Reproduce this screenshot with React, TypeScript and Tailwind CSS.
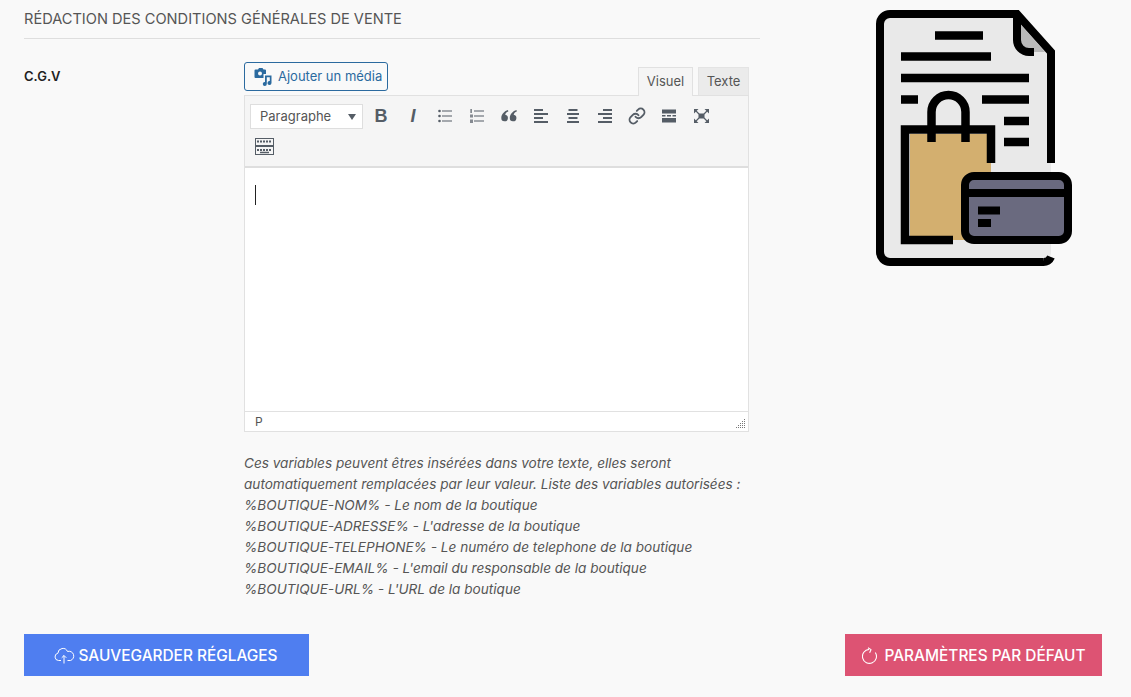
import type { ReactNode } from "react";
import { Link } from "lucide-react";

const VARIABLES = [
  "%BOUTIQUE-NOM% - Le nom de la boutique",
  "%BOUTIQUE-ADRESSE% - L'adresse de la boutique",
  "%BOUTIQUE-TELEPHONE% - Le numéro de telephone de la boutique",
  "%BOUTIQUE-EMAIL% - L'email du responsable de la boutique",
  "%BOUTIQUE-URL% - L'URL de la boutique",
];

function MediaIcon() {
  return (
    <svg width="19" height="19" viewBox="0 0 19 19" fill="#2b6a9f">
      <path d="M1.500 2.500H4L5 1h3.500l1 1.500H11a1 1 0 0 1 1 1V7H9.500v4H1.500a1 1 0 0 1-1-1V3.500a1 1 0 0 1 1-1Z" />
      <circle cx="6" cy="6.500" r="2" fill="#f9f9f9" />
      <path d="M11 8.500h6.500v7.500a2 2 0 1 1-1.700-2V10.200h-3v6.800a2 2 0 1 1-1.800-2Z" />
    </svg>
  );
}

function Bullets() {
  return (
    <svg width="16" height="16" viewBox="0 0 16 16" fill="#555d66">
      <circle cx="2.500" cy="3" r="1.300" /><circle cx="2.500" cy="8" r="1.300" /><circle cx="2.500" cy="13" r="1.300" />
      <rect x="5" y="2.500" width="10" height="1" /><rect x="5" y="7.500" width="10" height="1" /><rect x="5" y="12.500" width="10" height="1" />
    </svg>
  );
}

function Numbered() {
  return (
    <svg width="16" height="16" viewBox="0 0 16 16" fill="#555d66">
      <rect x="1.500" y="1" width="1.200" height="4" /><rect x="1" y="6.500" width="3" height="3" opacity="0.7" /><rect x="1" y="11.500" width="3" height="3.500" opacity="0.7" />
      <rect x="5" y="2.500" width="10" height="1" /><rect x="5" y="7.500" width="10" height="1" /><rect x="5" y="12.500" width="10" height="1" />
    </svg>
  );
}

function Quote() {
  return (
    <svg width="16" height="16" viewBox="0 0 16 16" fill="#555d66">
      <path d="M7 2C3.500 3 .3 6 .3 10a3.300 3.300 0 1 0 3.900-3.200C4.400 5.300 5.500 4.200 7.300 3.600Z" />
      <path d="M15.500 2C12 3 8.800 6 8.800 10a3.300 3.300 0 1 0 3.900-3.200c.2-1.500 1.300-2.600 3.100-3.200Z" />
    </svg>
  );
}

function Align({ side }: { side: "left" | "center" | "right" }) {
  const shortX = side === "left" ? 1 : side === "center" ? 3.500 : 6;
  const wideX = side === "center" ? 2 : 1;
  return (
    <svg width="16" height="16" viewBox="0 0 16 16" fill="#555d66">
      <rect x={shortX} y="1" width="9" height="2" />
      <rect x={wideX} y="5" width={side === "center" ? 12 : 14} height="2" />
      <rect x={shortX} y="9" width="9" height="2" />
      <rect x={wideX} y="13" width={side === "center" ? 12 : 14} height="2" />
    </svg>
  );
}

function ReadMore() {
  return (
    <svg width="16" height="16" viewBox="0 0 16 16" fill="#555d66">
      <rect x="1" y="1.500" width="14" height="4" />
      <rect x="1" y="7" width="3.500" height="1.500" /><rect x="6" y="7" width="4" height="1.500" /><rect x="11.500" y="7" width="3.500" height="1.500" />
      <rect x="1" y="10" width="14" height="4.500" />
    </svg>
  );
}

function Fullscreen() {
  return (
    <svg width="17" height="16" viewBox="0 0 17 16" fill="#555d66">
      <rect x="5.500" y="5.500" width="6" height="5" />
      <path d="M1 1h4.500L1 5.500ZM16 1v4.500L11.500 1ZM1 15v-4.500L5.500 15ZM16 15h-4.500L16 10.500Z" />
      <path d="M3 3l3 3M14 3l-3 3M3 13l3-3M14 13l-3-3" stroke="#555d66" strokeWidth="1.200" />
    </svg>
  );
}

function KeyboardIcon() {
  return (
    <svg width="19" height="17" viewBox="0 0 19 17" fill="none" stroke="#555d66">
      <rect x="0.500" y="0.500" width="18" height="7" />
      <rect x="0.500" y="8.500" width="18" height="8" />
      <path d="M2 3.500h15M2 12h15" strokeWidth="2" strokeDasharray="2 1" />
      <path d="M5 14.500h9" strokeWidth="1.500" />
    </svg>
  );
}

function ToolButton({ children }: { children: ReactNode }) {
  return <div className="flex h-[30px] w-8 items-center justify-center">{children}</div>;
}

function Illustration() {
  return (
    <svg width="200" height="260" viewBox="875 8 200 260" fill="none">
      <path d="M880 24a10 10 0 0 1 10-10h127l34 38v200a10 10 0 0 1-10 10H890a10 10 0 0 1-10-10Z" fill="#e9e9e9" />
      <path d="M1021 25l24 27h-24Z" fill="#b9b9b9" />
      <path d="M1043 262a8 8 0 0 0 8-5M1051 163V52l-34-38H890a10 10 0 0 0-10 10v228a10 10 0 0 0 10 10h153" stroke="#000" strokeWidth="8" />
      <path d="M1017 14v26a12 12 0 0 0 12 12h5" stroke="#000" strokeWidth="8" />
      <path d="M935 35.500h48M901 56.500h90M901 78h128M901 99.500h17M982 99.500h47M1004 121h25M1004 142h25" stroke="#000" strokeWidth="8.500" />
      <rect x="910" y="134" width="81" height="106" fill="#d3af6f" />
      <path d="M953 240h-48V129.500h86V163" stroke="#000" strokeWidth="8.500" />
      <path d="M931.500 142v-30a17 17 0 0 1 34 0v30" stroke="#000" strokeWidth="8.500" />
      <rect x="965" y="176" width="103" height="64" rx="9" fill="#6a6a7f" stroke="#000" strokeWidth="8" />
      <path d="M965 193h103M978 210.500h22M978 223h13" stroke="#000" strokeWidth="8" />
    </svg>
  );
}

function CloudUpload() {
  return (
    <svg width="21" height="17" viewBox="0 0 21 17" fill="none" stroke="#fff" strokeWidth="1">
      <path d="M7 13.500H4.500a3.700 3.700 0 0 1-.6-7.300A5 5 0 0 1 13.500 4.500a4.500 4.500 0 0 1 3 9H13.500" />
      <path d="M10 16.500V8.500M7.700 10.800 10 8.500l2.300 2.300" />
    </svg>
  );
}

function Reset() {
  return (
    <svg width="17" height="18" viewBox="0 0 17 18" fill="none" stroke="#fff" strokeWidth="1.100">
      <path d="M13.300 5.500a7 7 0 1 1-6.300-3.100" />
      <path d="M6 0.800 9 2.600 7.600 5.800" />
    </svg>
  );
}

export default function App() {
  return (
    <div className="flex h-[697px] w-[1131px] flex-col overflow-hidden bg-[#f9f9f9] pl-6 pr-[29px] font-['Inter',sans-serif] text-[#555]">
      <div className="flex">
        <div className="w-[736px]">
          <h2 className="flex h-[39px] items-center border-b border-[#dedede] pt-px text-[14.600px] text-[#555]">
            RÉDACTION DES CONDITIONS GÉNÉRALES DE VENTE
          </h2>

          <div className="mt-[23px] flex">
            <div className="w-[220px] pt-[5px] text-[13px] font-semibold text-[#222]">C.G.V</div>
            <div className="w-[505px]">
              <div className="flex items-end justify-between">
                <button className="mb-1 flex h-[29px] w-[144px] items-center gap-[5px] rounded-[3px] border border-[#2b6a9f] pl-[9px] text-[13px] text-[#2b6a9f]">
                  <MediaIcon />
                  Ajouter un média
                </button>
                <div className="flex items-end gap-[5px]">
                  <div className="relative top-px z-10 flex h-[29px] w-[55px] items-center justify-center border border-b-0 border-[#e1e1e1] bg-[#f5f5f5] text-[13px] text-[#555]">
                    Visuel
                  </div>
                  <div className="flex h-[28px] w-[51px] items-center justify-center border border-b-0 border-[#e4e4e4] bg-[#ebebeb] text-[13px] text-[#555]">
                    Texte
                  </div>
                </div>
              </div>

              <div className="border border-[#e1e1e1] bg-white">
                <div className="h-[72px] border-b-2 border-[#dedede] bg-[#f5f5f5] pl-[5px] pt-[5px]">
                  <div className="flex items-center">
                    <div className="mr-[2px] flex h-[25px] w-[113px] items-center justify-between border border-[#dedede] bg-white pl-[9px] pr-[6px] pt-px text-[13px] text-[#555]">
                      Paragraphe
                      <span className="h-0 w-0 border-x-[4px] border-t-[6px] border-x-transparent border-t-[#555d66]" />
                    </div>
                    <ToolButton><span className="font-['Liberation_Sans',sans-serif] text-[18px] font-bold text-[#555d66]">B</span></ToolButton>
                    <ToolButton><span className="font-['Liberation_Sans',sans-serif] text-[18px] font-bold italic text-[#555d66]">I</span></ToolButton>
                    <ToolButton><Bullets /></ToolButton>
                    <ToolButton><Numbered /></ToolButton>
                    <ToolButton><Quote /></ToolButton>
                    <ToolButton><Align side="left" /></ToolButton>
                    <ToolButton><Align side="center" /></ToolButton>
                    <ToolButton><Align side="right" /></ToolButton>
                    <ToolButton><Link size={18} strokeWidth={2.500} color="#555d66" /></ToolButton>
                    <ToolButton><ReadMore /></ToolButton>
                    <ToolButton><Fullscreen /></ToolButton>
                  </div>
                  <div className="flex h-[30px] w-[29px] items-center justify-center">
                    <KeyboardIcon />
                  </div>
                </div>
                <div className="h-[243px] pl-[10px] pt-[17px]">
                  <div className="h-[20px] w-px bg-[#222]" />
                </div>
                <div className="relative flex h-[20px] items-center border-t border-[#e1e1e1] pl-[10px] text-[12px] text-[#555]">
                  P
                  <svg className="absolute bottom-[3px] right-[3px]" width="9" height="9" viewBox="0 0 9 9" fill="#777">
                    <path d="M8 0h1v1H8zM6 2h1v1H6zM8 2h1v1H8zM4 4h1v1H4zM6 4h1v1H6zM8 4h1v1H8zM2 6h1v1H2zM4 6h1v1H4zM6 6h1v1H6zM8 6h1v1H8zM0 8h1v1H0zM2 8h1v1H2zM4 8h1v1H4zM6 8h1v1H6zM8 8h1v1H8z" />
                  </svg>
                </div>
              </div>

              <p className="mt-[21px] w-[505px] text-[13.600px] leading-[21px] italic text-[#555]">
                Ces variables peuvent êtres insérées dans votre texte, elles seront automatiquement remplacées par leur valeur. Liste des variables autorisées :
                {VARIABLES.map((line) => (
                  <span key={line} className="block">{line}</span>
                ))}
              </p>
            </div>
          </div>
        </div>
        <div className="ml-[115px] mt-2 shrink-0"><Illustration /></div>
      </div>

      <div className="mt-[34px] flex justify-between">
        <button className="flex h-[42px] w-[285px] items-center justify-center gap-[3px] bg-[#4f7ef0] pr-[1px] pt-px text-[15.400px] font-medium text-white">
          <CloudUpload />
          SAUVEGARDER RÉGLAGES
        </button>
        <button className="flex h-[42px] w-[257px] items-center justify-center gap-[6px] bg-[#dd5373] pt-px text-[15.400px] font-medium text-white">
          <Reset />
          PARAMÈTRES PAR DÉFAUT
        </button>
      </div>
    </div>
  );
}
